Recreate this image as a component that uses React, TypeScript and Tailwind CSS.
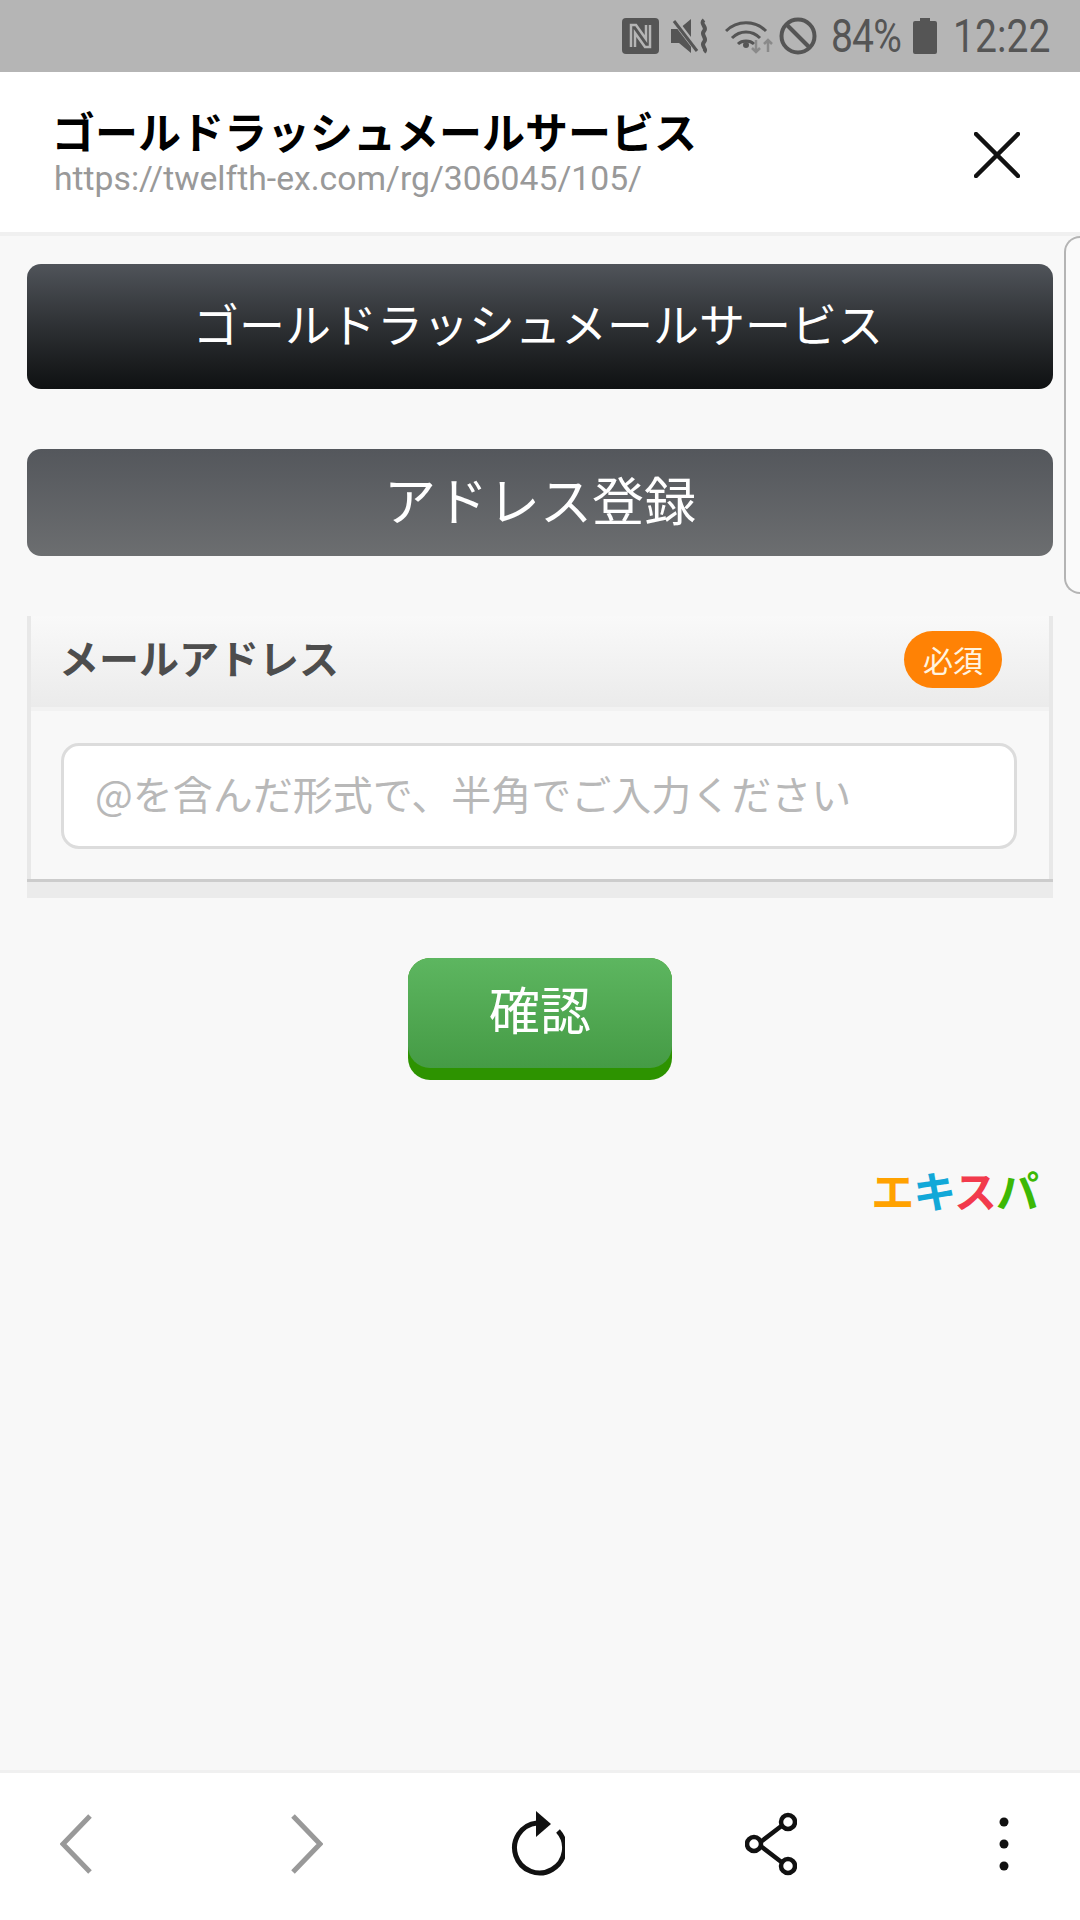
// Gold rush mail signup page inside an in-app browser
const jp = "font-['Noto_Sans_CJK_JP','Noto_Sans',sans-serif]";

function StatusIcons() {
  return (
    <>
      {/* NFC */}
      <svg width="37" height="36" viewBox="0 0 37 36" className="mr-[12px]">
        <rect x="0" y="0" width="37" height="36" rx="4" fill="#555" />
        <path d="M9 29V7h5l10 14V7" fill="none" stroke="#b5b5b5" strokeWidth="2.5" />
        <path d="M28 7v22h-5L13 15v14" fill="none" stroke="#b5b5b5" strokeWidth="2.5" />
      </svg>
      {/* vibrate / mute */}
      <svg width="38" height="36" viewBox="0 0 38 36" className="mr-[16px]">
        <path d="M0 11h8L20 1v34L8 25H0z" fill="#555" />
        <path d="M4 3l23 30" stroke="#b5b5b5" strokeWidth="6" />
        <path d="M3 3l23 30" stroke="#555" strokeWidth="3" />
        <path d="M33 2c-5 4 4 7 0 11s4 7 0 11 4 7 0 10" fill="none" stroke="#555" strokeWidth="4" />
      </svg>
      {/* wifi */}
      <svg width="50" height="36" viewBox="0 0 50 36" className="mr-[4px]">
        <path d="M1 13c11-11 29-11 40 0" fill="none" stroke="#555" strokeWidth="3" />
        <path d="M7 20c8-8 20-8 28 0" fill="none" stroke="#555" strokeWidth="3" />
        <path d="M13 26c4-4 12-4 16 0" fill="none" stroke="#555" strokeWidth="3" />
        <circle cx="21" cy="27" r="3" fill="#555" />
        <path d="M31 22v12m-4-4l4 4 4-4" fill="none" stroke="#8a8a8a" strokeWidth="2.5" />
        <path d="M43 34V22m-4 4l4-4 4 4" fill="none" stroke="#8a8a8a" strokeWidth="2.5" />
      </svg>
      {/* blocked */}
      <svg width="38" height="38" viewBox="0 0 38 38" className="mr-[14px]">
        <circle cx="19" cy="19" r="16.5" fill="none" stroke="#555" strokeWidth="4" />
        <path d="M7 7l24 24" stroke="#555" strokeWidth="4" />
      </svg>
    </>
  );
}

function BottomIcon({ children, w, className }: { children: React.ReactNode; w: number; className?: string }) {
  return (
    <svg width={w} height="66" viewBox={`0 0 ${w} 66`} fill="none" className={className}>
      {children}
    </svg>
  );
}

export default function App() {
  return (
    <div className="relative w-[1080px] h-[1920px] flex flex-col bg-[#f8f8f8] overflow-hidden">
      {/* Status bar */}
      <div className="h-[72px] shrink-0 bg-[#b5b5b5] flex flex-row items-center justify-end pr-[31px] text-[#555] font-['Roboto',sans-serif]">
        <StatusIcons />
        <span className="text-[46px] leading-none w-[70px] tracking-[-1px] mr-[12px] scale-x-[.85] origin-left whitespace-nowrap">84%</span>
        <svg width="24" height="36" viewBox="0 0 24 36" className="mr-[16px]">
          <path d="M7 0h10v3h5a2 2 0 0 1 2 2v29a2 2 0 0 1-2 2H2a2 2 0 0 1-2-2V5a2 2 0 0 1 2-2h5z" fill="#555" />
        </svg>
        <span className="text-[46px] leading-none w-[96px] scale-x-[.85] origin-left whitespace-nowrap">12:22</span>
      </div>

      {/* Custom tab header */}
      <div className="h-[160px] shrink-0 bg-white flex flex-row items-center justify-between pl-[52px] pr-[60px]">
        <div className="flex flex-col gap-[5px] pb-[2px]">
          <div className={`${jp} text-[43px] leading-[50px] font-bold text-black whitespace-nowrap`}>ゴールドラッシュメールサービス</div>
          <div className="pl-[2px] font-['Roboto',sans-serif] text-[33.7px] leading-[38px] text-[#999] whitespace-nowrap">https://twelfth-ex.com/rg/306045/105/</div>
        </div>
        <svg width="46" height="46" viewBox="0 0 46 46" fill="none" stroke="#111" strokeWidth="4.5" strokeLinecap="round" className="mt-[6px]">
          <path d="M2 2l42 42M44 2L2 44" />
        </svg>
      </div>
      <div className="h-[4px] shrink-0 bg-[#f0f0f0]"></div>

      {/* Page */}
      <div className="flex-1 flex flex-col px-[27px] pt-[28px]">
        <div className={`${jp} h-[125px] shrink-0 rounded-[14px] bg-gradient-to-b from-[#50545a] to-[#0f1112] flex items-center justify-center text-white text-[46px] pb-[8px] pr-[4px]`}>
          ゴールドラッシュメールサービス
        </div>

        <div className={`${jp} h-[107px] shrink-0 mt-[60px] rounded-[14px] bg-gradient-to-b from-[#54575c] to-[#6c6e70] flex items-center justify-center text-white text-[52px] pb-[8px]`}>
          アドレス登録
        </div>

        {/* Email form */}
        <div className="mt-[60px] shrink-0 border-x-[4px] border-[#e8e8e8]">
          <div className="h-[91px] bg-gradient-to-b from-[#f9f9f9] to-[#ebebeb] flex flex-row items-center justify-between pl-[28px] pr-[47px] pb-[4px]">
            <span className={`${jp} text-[40px] font-bold text-[#4d4d4d] pb-[6px]`}>メールアドレス</span>
            <span className={`${jp} h-[57px] w-[98px] rounded-full bg-[#ff8205] flex items-center justify-center text-[30px] text-[#fff4e0]`}>必須</span>
          </div>
          <div className="border-t-[4px] border-[#f2f2f2] bg-[#f8f8f8] h-[172px] px-[30px] pt-[32px]">
            <input
              readOnly
              placeholder="@を含んだ形式で、半角でご入力ください"
              className={`${jp} w-[956px] h-[106px] rounded-[18px] bg-white border-[3px] border-[#dcdcdc] pl-[31px] pb-[6px] text-[40px] outline-none placeholder:text-[#b8b8b8]`}
            />
          </div>
        </div>
        <div className="h-[19px] shrink-0 border-t-[3px] border-[#cccccc] bg-[#ebebeb]"></div>

        {/* Confirm button */}
        <div className="self-center mt-[60px] w-[264px] h-[122px] shrink-0 rounded-[22px] bg-[#2d9300]">
          <div className={`${jp} h-[110px] rounded-[22px] bg-gradient-to-b from-[#5db660] to-[#459b45] flex items-center justify-center text-white text-[51px] pb-[10px]`}>
            確認
          </div>
        </div>

        {/* Logo */}
        <div className={`${jp} self-end mr-[15px] mt-[84px] text-[43px] leading-[50px] font-bold tracking-[-1px] whitespace-nowrap`}>
          <span className="text-[#ffa200]">エ</span>
          <span className="text-[#12a8d8]">キ</span>
          <span className="text-[#f23a4c]">ス</span>
          <span className="text-[#3cb805]">パ</span>
        </div>
      </div>

      {/* Bottom toolbar */}
      <div className="h-[3px] shrink-0 bg-[#f0f0f0]"></div>
      <div className="h-[147px] shrink-0 bg-white flex flex-row items-start pt-[38px] pl-[60px]">
        <BottomIcon w={32}>
          <path d="M30 5L3 33l27 28" stroke="#999" strokeWidth="5" />
        </BottomIcon>
        <BottomIcon w={32} className="ml-[199px]">
          <path d="M2 5l27 28L2 61" stroke="#999" strokeWidth="5" />
        </BottomIcon>
        <BottomIcon w={58} className="ml-[184px]">
          <path d="M51 20a25 25 0 1 1-21-8" stroke="#111" strokeWidth="5" />
          <path d="M29 0l15 13-15 13z" fill="#111" />
        </BottomIcon>
        <BottomIcon w={52} className="ml-[180px]">
          <path d="M39 13L13 33l26 20" stroke="#111" strokeWidth="4.5" />
          <circle cx="43" cy="11" r="7" fill="#fff" stroke="#111" strokeWidth="4.5" />
          <circle cx="9" cy="33" r="7" fill="#fff" stroke="#111" strokeWidth="4.5" />
          <circle cx="43" cy="55" r="7" fill="#fff" stroke="#111" strokeWidth="4.5" />
        </BottomIcon>
        <BottomIcon w={12} className="ml-[201px]">
          <circle cx="6" cy="11" r="4.5" fill="#111" />
          <circle cx="6" cy="33" r="4.5" fill="#111" />
          <circle cx="6" cy="55" r="4.5" fill="#111" />
        </BottomIcon>
      </div>

      {/* Side tab peeking in from the right */}
      <div className="absolute right-0 top-[236px] w-[16px] h-[358px] rounded-l-[16px] border-2 border-r-0 border-[#b4b4b4] bg-[#fafafa]"></div>
    </div>
  );
}
